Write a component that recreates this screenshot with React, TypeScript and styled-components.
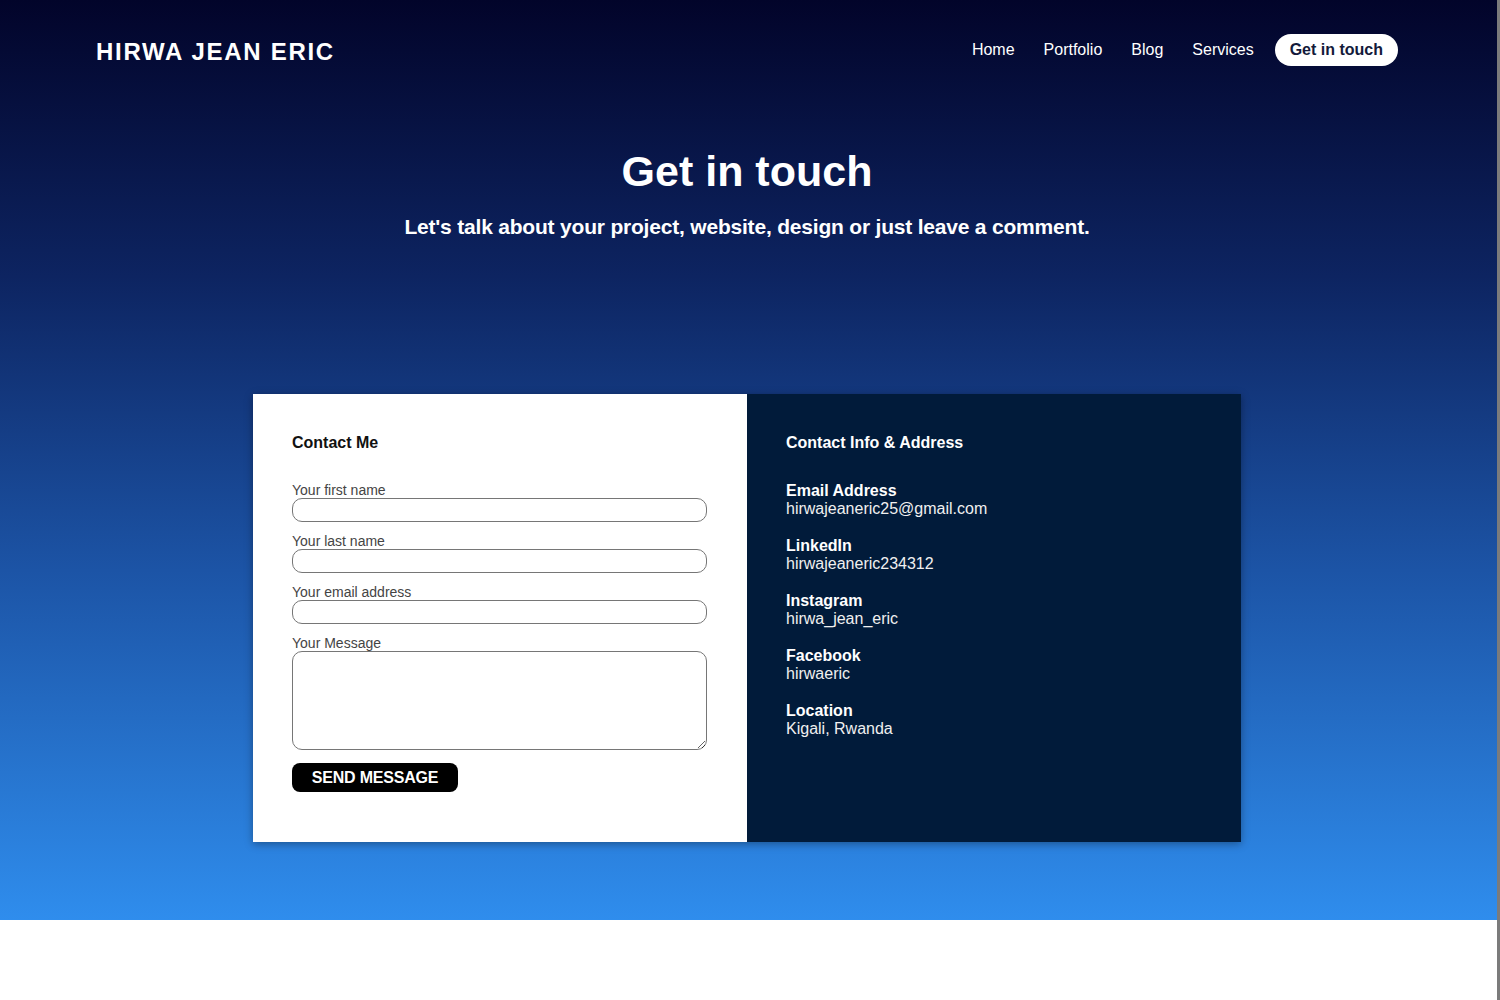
import React from "react";
import styled, { createGlobalStyle } from "styled-components";

const Global = createGlobalStyle`
  html, body { margin: 0; padding: 0; background: #ffffff; }
  body { font-family: "Liberation Sans", Arial, sans-serif; }
  * { box-sizing: border-box; }
`;

const ScrollStrip = styled.div`
  position: fixed;
  top: 0;
  right: 0;
  width: 3px;
  height: 100vh;
  background: #7b7b7b;
`;

const Hero = styled.section`
  height: 920px;
  background: linear-gradient(180deg, #02042a 0%, #0d2461 30%, #1c54a6 62%, #2f8ded 100%);
  display: flex;
  flex-direction: column;
  align-items: center;
  padding-right: 6px;
`;

const Header = styled.header`
  width: 100%;
  height: 100px;
  padding: 0 96px 0 96px;
  display: flex;
  align-items: center;
  justify-content: space-between;
`;

const Logo = styled.div`
  color: #ffffff;
  font-weight: 700;
  font-size: 24px;
  letter-spacing: 1.7px;
  padding-top: 4px;
`;

const Nav = styled.nav`
  display: flex;
  align-items: center;
  gap: 29px;
`;

const NavLink = styled.a`
  color: #ffffff;
  font-size: 16px;
  text-decoration: none;
`;

const NavButton = styled.a`
  background: #ffffff;
  color: #131a3a;
  font-size: 16px;
  font-weight: 700;
  text-decoration: none;
  height: 32px;
  padding: 0 15px;
  margin-left: -8px;
  border-radius: 16px;
  display: flex;
  align-items: center;
`;

const Title = styled.h1`
  margin: 46px 0 0;
  color: #ffffff;
  font-size: 43px;
  font-weight: 700;
  line-height: 50px;
`;

const Subtitle = styled.p`
  margin: 19px 0 0;
  color: #ffffff;
  font-size: 21px;
  font-weight: 700;
  line-height: 24px;
  letter-spacing: -0.2px;
`;

const Card = styled.div`
  margin-top: 155px;
  width: 988px;
  height: 448px;
  display: grid;
  grid-template-columns: 494px 494px;
  box-shadow: 0 2px 8px rgba(0, 0, 0, 0.35);
`;

const FormPane = styled.form`
  background: #ffffff;
  padding: 40px 39px;
  display: flex;
  flex-direction: column;
`;

const InfoPane = styled.div`
  background: #011b3a;
  padding: 40px 39px;
  display: flex;
  flex-direction: column;
  color: #ffffff;
`;

const PaneTitle = styled.h3<{ $light?: boolean }>`
  margin: 0 0 30px;
  font-size: 16px;
  line-height: 18px;
  font-weight: 700;
  color: ${(p) => (p.$light ? "#ffffff" : "#111111")};
`;

const Field = styled.label`
  display: flex;
  flex-direction: column;
  margin-bottom: 11px;
`;

const LabelText = styled.span`
  font-size: 14px;
  line-height: 16px;
  color: #444444;
`;

const Input = styled.input`
  width: 415px;
  height: 24px;
  border: 1.5px solid #767676;
  border-radius: 10px;
  background: #ffffff;
  font-size: 14px;
  padding: 0 8px;
  outline: none;
`;

const TextArea = styled.textarea`
  width: 415px;
  height: 99px;
  border: 1.5px solid #767676;
  border-radius: 10px;
  background: #ffffff;
  font-size: 14px;
  padding: 6px 8px;
  outline: none;
  display: block;
`;

const SendButton = styled.button`
  margin-top: 2px;
  width: 166px;
  height: 29px;
  background: #000000;
  color: #ffffff;
  border: none;
  border-radius: 8px;
  font-family: "Liberation Sans", Arial, sans-serif;
  font-size: 16px;
  font-weight: 700;
  letter-spacing: -0.2px;
  padding: 0;
`;

const InfoList = styled.div`
  display: flex;
  flex-direction: column;
  gap: 19px;
`;

const InfoItem = styled.div`
  display: flex;
  flex-direction: column;
  font-size: 16px;
  line-height: 18px;
`;

const InfoLabel = styled.span`
  font-weight: 700;
`;

const InfoValue = styled.span`
  color: #f0f0f0;
`;

const Below = styled.div`
  height: 80px;
  background: #ffffff;
`;

const info = [
  ["Email Address", "hirwajeaneric25@gmail.com"],
  ["LinkedIn", "hirwajeaneric234312"],
  ["Instagram", "hirwa_jean_eric"],
  ["Facebook", "hirwaeric"],
  ["Location", "Kigali, Rwanda"],
];

export default function App() {
  return (
    <>
      <Global />
      <Hero>
        <Header>
          <Logo>HIRWA JEAN ERIC</Logo>
          <Nav>
            <NavLink href="#">Home</NavLink>
            <NavLink href="#">Portfolio</NavLink>
            <NavLink href="#">Blog</NavLink>
            <NavLink href="#">Services</NavLink>
            <NavButton href="#">Get in touch</NavButton>
          </Nav>
        </Header>
        <Title>Get in touch</Title>
        <Subtitle>Let's talk about your project, website, design or just leave a comment.</Subtitle>
        <Card>
          <FormPane onSubmit={(e) => e.preventDefault()}>
            <PaneTitle>Contact Me</PaneTitle>
            <Field>
              <LabelText>Your first name</LabelText>
              <Input type="text" />
            </Field>
            <Field>
              <LabelText>Your last name</LabelText>
              <Input type="text" />
            </Field>
            <Field>
              <LabelText>Your email address</LabelText>
              <Input type="email" />
            </Field>
            <Field>
              <LabelText>Your Message</LabelText>
              <TextArea />
            </Field>
            <SendButton type="submit">SEND MESSAGE</SendButton>
          </FormPane>
          <InfoPane>
            <PaneTitle $light>Contact Info &amp; Address</PaneTitle>
            <InfoList>
              {info.map(([k, v]) => (
                <InfoItem key={k}>
                  <InfoLabel>{k}</InfoLabel>
                  <InfoValue>{v}</InfoValue>
                </InfoItem>
              ))}
            </InfoList>
          </InfoPane>
        </Card>
      </Hero>
      <Below />
      <ScrollStrip />
    </>
  );
}
